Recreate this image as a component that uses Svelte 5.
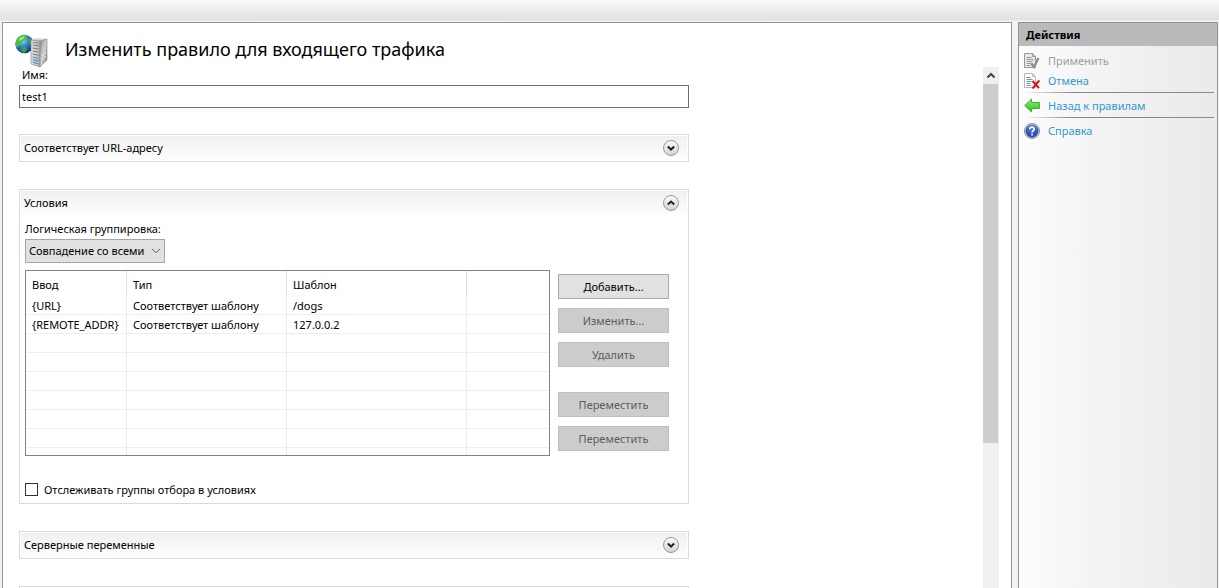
<script>
  let name = $state('test1');
  let track = $state(false);
  let open = $state({ url: false, conditions: true, vars: false });
  const rows = [
    ['{URL}', 'Соответствует шаблону', '/dogs', ''],
    ['{REMOTE_ADDR}', 'Соответствует шаблону', '127.0.0.2', ''],
    ...Array.from({ length: 7 }, () => ['', '', '', ''])
  ];
</script>

{#snippet chevron(up)}
  <svg class="chev" viewBox="0 0 16 16" aria-hidden="true">
    <circle cx="8" cy="8" r="7.5" fill="url(#knob)" stroke="#999" />
    {#if up}
      <path d="M4.8 9.6 8 6.6l3.2 3" fill="none" stroke="#222" stroke-width="2" />
    {:else}
      <path d="M4.8 6.6 8 9.6l3.2-3" fill="none" stroke="#222" stroke-width="2" />
    {/if}
  </svg>
{/snippet}

{#snippet head(key, title)}
  <button class="panel-head" aria-expanded={open[key]} onclick={() => (open[key] = !open[key])}>
    <span>{title}</span>
    {@render chevron(open[key])}
  </button>
{/snippet}

<svg class="defs" width="0" height="0" aria-hidden="true">
  <defs>
    <linearGradient id="knob" x1="0" y1="0" x2="0" y2="1">
      <stop offset="0" stop-color="#fdfdfd" />
      <stop offset="1" stop-color="#d2d2d2" />
    </linearGradient>
  </defs>
</svg>

<div class="window">
  <div class="toolbar"></div>
  <div class="columns">
    <main>
      <header>
        <svg class="logo" viewBox="0 0 34 34" aria-hidden="true">
          <defs>
            <radialGradient id="globe" cx=".38" cy=".3" r=".75">
              <stop offset="0" stop-color="#9fe0fa" />
              <stop offset=".45" stop-color="#2b83dc" />
              <stop offset="1" stop-color="#0b2a86" />
            </radialGradient>
            <linearGradient id="front"><stop offset="0" stop-color="#e8e8e8" /><stop offset="1" stop-color="#b5b7b9" /></linearGradient>
            <linearGradient id="side" x1="0" y1="0" x2="1" y2="1"><stop offset="0" stop-color="#8c8c8c" /><stop offset=".5" stop-color="#d0d0d0" /><stop offset="1" stop-color="#777" /></linearGradient>
          </defs>
          <circle cx="9.5" cy="10" r="9.2" fill="url(#globe)" />
          <path d="M2 5C4 2 7 1 9 1l3 1-2 2 1 2-3 1-1 3-3 1-2 3C0 11 0 8 2 5z" fill="#4fc13d" />
          <path d="M12 4l4 1 2 3v4l-3-1-1-3-2-1zM7 12l4 1 1 3-3 3-3-2z" fill="#35a543" />
          <path d="M4 5c2-2 4-3 6-3L8 5 5 7z" fill="#b9f2a0" opacity=".8" />
          <path d="M16 6l4-2 12 1-6 3z" fill="#d9d9d9" />
          <path d="M16 6l9 1v26l-9-3z" fill="url(#front)" stroke="#777" stroke-width=".6" />
          <path d="M25 7l7-2v21l-7 7z" fill="url(#side)" stroke="#777" stroke-width=".5" />
          <path d="M17.5 8.5l6 .6M17.5 11l6 .8M17.5 14l6 1M17.5 17l6 1.1M17.5 20l6 1.3M17.5 23l6 1.4" stroke="#777b80" stroke-width="1" />
          <path d="M17.5 25.5l6 1.7M17.5 28l6 2" stroke="#4a86c5" stroke-width="1.2" />
          <path d="M28 20v2M28 24v2M30 18v2M30 22v2" stroke="#eee" stroke-width="1" />
        </svg>
        <h1>Изменить правило для входящего трафика</h1>
      </header>

      <div class="scroller">
        <form onsubmit={(e) => e.preventDefault()}>
          <label class="name-label" for="name">Имя:</label>
          <input id="name" class="name" type="text" bind:value={name} />

          <section class="panel">{@render head('url', 'Соответствует URL-адресу')}</section>

          <section class="panel">
            {@render head('conditions', 'Условия')}
            {#if open.conditions}
              <div class="body">
                <label class="group-label" for="grouping">Логическая группировка:</label>
                <div class="select">
                  <select id="grouping">
                    <option>Совпадение со всеми элементами</option>
                    <option>Совпадение с любым элементом</option>
                  </select>
                  <svg viewBox="0 0 10 6" aria-hidden="true"><path d="M1 .8l4 4 4-4" fill="none" stroke="#555" /></svg>
                </div>
                <div class="split">
                  <div class="grid">
                    <table>
                      <colgroup><col class="c1" /><col class="c2" /><col class="c3" /><col /></colgroup>
                      <thead>
                        <tr><th>Ввод</th><th>Тип</th><th>Шаблон</th><th></th></tr>
                      </thead>
                      <tbody>
                        {#each rows as row}
                          <tr>{#each row as cell}<td>{cell}</td>{/each}</tr>
                        {/each}
                      </tbody>
                    </table>
                  </div>
                  <div class="buttons">
                    <button type="button">Добавить...</button>
                    <button type="button" disabled>Изменить...</button>
                    <button type="button" disabled>Удалить</button>
                    <div class="moves">
                      <button type="button" disabled>Переместить</button>
                      <button type="button" disabled>Переместить</button>
                    </div>
                  </div>
                </div>
                <label class="check"><input type="checkbox" bind:checked={track} />Отслеживать группы отбора в условиях</label>
              </div>
            {/if}
          </section>

          <section class="panel">{@render head('vars', 'Серверные переменные')}</section>
          <section class="panel"><div class="panel-head"></div></section>
        </form>

        <div class="scrollbar">
          <svg viewBox="0 0 16 17" aria-hidden="true"><path d="M4.5 10.5L8 7l3.5 3.500" fill="none" stroke="#444" stroke-width="2" /></svg>
          <div class="thumb"></div>
        </div>
      </div>
    </main>

    <aside>
      <h2>Действия</h2>
      <ul>
        <li>
          <button class="action" disabled>
            <svg viewBox="0 0 16 16" aria-hidden="true">
              <path d="M.5.5h8l3 3v11H.5z" fill="#e9e9e9" stroke="#999" />
              <path d="M8.500.5v3h3" fill="none" stroke="#999" />
              <path d="M2.500 4.500h5M2.500 6.500h7M2.500 8.500h6M2.500 10.500h5M2.500 12.500h4" stroke="#999" />
              <path d="M7.500 10.500l2.500 3.500 4.500-9" fill="none" stroke="#909090" stroke-width="2.400" />
            </svg>Применить
          </button>
        </li>
        <li>
          <button class="action">
            <svg viewBox="0 0 16 16" aria-hidden="true">
              <path d="M.5.5h8l3 3v11H.5z" fill="#fff" stroke="#b5b5b5" />
              <path d="M8.500.5v3h3" fill="none" stroke="#b5b5b5" />
              <path d="M2.500 4.500h4M2.500 6.500h6M2.500 8.500h5M2.500 10.500h4M2.500 12.500h4" stroke="#6b93b5" />
              <path d="M8.500 8l6.500 7M15.300 7.500L8.500 15.500" stroke="#d01a1a" stroke-width="2" />
            </svg>Отмена
          </button>
        </li>
        <li class="ruled">
          <button class="action">
            <svg viewBox="0 0 16 16" aria-hidden="true">
              <defs><linearGradient id="arrow" x1="0" y1="0" x2="0" y2="1"><stop offset="0" stop-color="#8df06a" /><stop offset="1" stop-color="#2fc21c" /></linearGradient></defs>
              <path d="M.7 7.500L7.500 1v3.500h8v6h-8V14z" fill="url(#arrow)" stroke="#3fa82e" stroke-width=".9" />
            </svg>Назад к правилам
          </button>
        </li>
        <li class="ruled">
          <button class="action">
            <svg viewBox="0 0 16 16" aria-hidden="true">
              <defs><radialGradient id="help" cx=".5" cy=".25" r=".8"><stop offset="0" stop-color="#6088d6" /><stop offset="1" stop-color="#143a9c" /></radialGradient></defs>
              <circle cx="8" cy="8" r="7.500" fill="#e4e4e4" stroke="#8a8a8a" />
              <circle cx="8" cy="8" r="6.500" fill="url(#help)" />
              <path d="M5.700 6.200C5.700 3.400 10.300 3.400 10.300 6c0 1.700-2.200 1.700-2.200 3.500M8.100 10.700v1.700" fill="none" stroke="#fff" stroke-width="1.600" />
            </svg>Справка
          </button>
        </li>
      </ul>
    </aside>
  </div>
</div>

<style>
  :global(body) { margin: 0; background: #f4f3f4; }
  * { box-sizing: border-box; }
  .defs { position: absolute; }
  .window {
    height: 100vh;
    display: flex;
    flex-direction: column;
    overflow: hidden;
    font: 11px/16px "Noto Sans", "Open Sans", sans-serif;
    color: #000;
  }
  button, input, select { font: inherit; color: inherit; border-radius: 0; margin: 0; }
  .toolbar { flex: none; height: 22px; background: linear-gradient(#fafafa, #e2e1e2 20px, #f4f3f4 21px); }
  .columns {
    flex: 1;
    min-height: 0;
    display: grid;
    grid-template-columns: minmax(0, 1fr) 200px;
    gap: 6px;
    padding: 0 1px 0 2px;
  }
  main {
    display: flex;
    flex-direction: column;
    min-height: 0;
    background: #fff;
    border: 1px solid #939393;
    border-bottom: 0;
  }
  header { flex: none; height: 44px; display: flex; padding: 11px 0 0 12px; gap: 16px; }
  .logo { width: 34px; height: 34px; flex: none; }
  h1 { margin: 0; font-size: 18px; line-height: 30px; font-weight: 400; }
  .scroller {
    flex: 1;
    min-height: 0;
    overflow: hidden;
    display: flex;
    justify-content: space-between;
    padding: 0 12px 0 16px;
  }
  form { width: 670px; display: flex; flex-direction: column; }
  .name-label { flex: none; padding-left: 3px; height: 18px; }
  .name { flex: none; height: 23px; border: 1px solid #707070; background: #fff; padding: 0 2px; }
  .panel { flex: none; border: 1px solid #dadada; margin-top: 26px; }
  .panel + .panel { margin-top: 27px; }
  .panel-head {
    display: flex;
    align-items: center;
    justify-content: space-between;
    width: 100%;
    height: 26px;
    padding: 0 8px 0 3px;
    border: 1px solid #fff;
    background: linear-gradient(#f0f0f0, #fdfdfd);
    text-align: left;
  }
  .chev { width: 16px; height: 16px; }
  .body { padding: 5px 19px 5px 5px; }
  .group-label { display: block; height: 18px; }
  .select { position: relative; width: 140px; }
  .select select {
    display: block;
    appearance: none;
    width: 100%;
    height: 24px;
    border: 1px solid #a6a6a6;
    background: #e1e1e1;
    padding: 0 19px 0 3px;
    overflow: hidden;
  }
  .select svg { position: absolute; right: 4px; top: 9px; width: 10px; height: 6px; pointer-events: none; }
  .split { display: flex; gap: 8px; margin-top: 7px; }
  .grid { flex: 1; min-width: 0; height: 186px; border: 1px solid #7f8488; overflow: hidden; background: #fff; }
  table { width: 100%; border-collapse: separate; border-spacing: 0; table-layout: fixed; }
  .c1 { width: 101px; }
  .c2 { width: 160px; }
  .c3 { width: 180px; }
  th, td { padding: 2px 0 0 6px; text-align: left; font-weight: 400; white-space: nowrap; border-right: 1px solid #eaeaea; }
  th { height: 25px; border-color: #e0e0e0; }
  td { height: 19px; border-bottom: 1px solid #eee; line-height: 16px; }
  th:last-child, td:last-child { border-right: 0; }
  .buttons { width: 111px; padding-top: 4px; display: flex; flex-direction: column; gap: 9px; }
  .moves { display: flex; flex-direction: column; gap: 9px; padding-top: 16px; }
  .buttons button { height: 25px; width: 100%; padding: 0; border: 1px solid #a9a9a9; background: #e1e1e1; }
  .buttons button:disabled { background: #ccc; border-color: #bfbfbf; color: #5c5c5c; }
  .check { display: flex; align-items: center; gap: 6px; margin-top: 25px; height: 17px; }
  .check input { appearance: none; width: 13px; height: 13px; border: 1px solid #333; background: #fff; }
  .check input:checked { background: #333; box-shadow: inset 0 0 0 2px #fff; }
  .scrollbar { width: 16px; background: #f0f0f0; display: flex; flex-direction: column; }
  .scrollbar svg { width: 16px; height: 17px; }
  .thumb { height: 69%; width: 15px; background: #cdcdcd; }

  aside {
    border: 1px solid #939393;
    border-bottom: 0;
    background: linear-gradient(90deg, #fdfdfd, #f3f3f3 40%, #eaeaea);
  }
  h2 { margin: 0; height: 23px; padding-left: 7px; font-size: 11px; line-height: 24px; font-weight: 700; background: #bababa; }
  ul { list-style: none; margin: 0; padding: 5px 3px 0 5px; }
  li { height: 20px; }
  li.ruled {
    height: 25px;
    padding-top: 4px;
    background: linear-gradient(90deg, transparent, #888 25%) 0 0 / 100% 1px no-repeat;
  }
  li:nth-child(2) { height: 21px; }
  .action {
    display: flex;
    align-items: center;
    gap: 8px;
    width: 100%;
    height: 20px;
    padding: 0;
    border: 0;
    background: none;
    color: #3399cc;
    cursor: pointer;
  }
  .action:disabled { color: #9f9f9f; cursor: default; }
  .action svg { width: 16px; height: 16px; flex: none; }
</style>
